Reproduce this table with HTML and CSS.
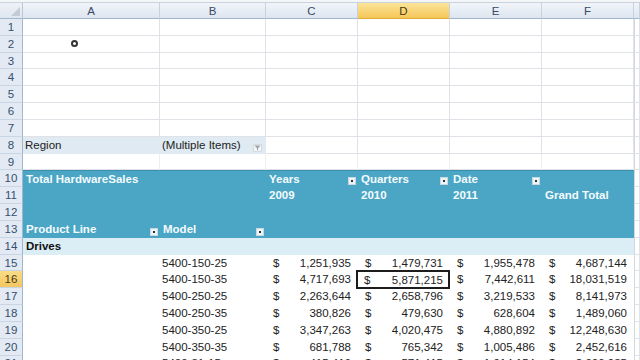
FILE: index.html
```html
<!DOCTYPE html>
<html>
<head>
<meta charset="utf-8">
<link rel="stylesheet" href="styles.css">
</head>
<body>
<div class="topstrip"></div>
<div class="sheet">
  <div class="row hdr">
    <div class="corner"><span class="tri"></span></div>
    <div class="ch">A</div><div class="ch">B</div><div class="ch">C</div>
    <div class="ch active">D</div><div class="ch">E</div><div class="ch">F</div><div class="ch"></div>
  </div>

  <div class="row"><div class="rh">1</div><div class="c"></div><div class="c"></div><div class="c"></div><div class="c"></div><div class="c"></div><div class="c"></div><div class="c g"></div></div>
  <div class="row"><div class="rh">2</div><div class="c"><span class="cursor"></span></div><div class="c"></div><div class="c"></div><div class="c"></div><div class="c"></div><div class="c"></div><div class="c g"></div></div>
  <div class="row"><div class="rh">3</div><div class="c"></div><div class="c"></div><div class="c"></div><div class="c"></div><div class="c"></div><div class="c"></div><div class="c g"></div></div>
  <div class="row"><div class="rh">4</div><div class="c"></div><div class="c"></div><div class="c"></div><div class="c"></div><div class="c"></div><div class="c"></div><div class="c g"></div></div>
  <div class="row"><div class="rh">5</div><div class="c"></div><div class="c"></div><div class="c"></div><div class="c"></div><div class="c"></div><div class="c"></div><div class="c g"></div></div>
  <div class="row"><div class="rh">6</div><div class="c"></div><div class="c"></div><div class="c"></div><div class="c"></div><div class="c"></div><div class="c"></div><div class="c g"></div></div>
  <div class="row"><div class="rh">7</div><div class="c"></div><div class="c"></div><div class="c"></div><div class="c"></div><div class="c"></div><div class="c"></div><div class="c g"></div></div>
  <div class="row"><div class="rh">8</div><div class="c filt">Region</div><div class="c filt">(Multiple Items)<span class="fbtn"><svg width="7" height="6" viewBox="0 0 7 6"><path d="M0.5 0.5h6L4 3.2V5.5L3 5V3.2z" fill="#9aa3ad"/></svg></span></div><div class="c"></div><div class="c"></div><div class="c"></div><div class="c"></div><div class="c g"></div></div>
  <div class="row"><div class="rh">9</div><div class="c nb"></div><div class="c nb"></div><div class="c nb"></div><div class="c nb"></div><div class="c nb"></div><div class="c nb"></div><div class="c g"></div></div>

  <div class="row band first"><div class="rh">10</div><div class="c">Total HardwareSales</div><div class="c"></div><div class="c">Years<span class="dd"></span></div><div class="c">Quarters<span class="dd"></span></div><div class="c">Date<span class="dd"></span></div><div class="c"></div><div class="c g"></div></div>
  <div class="row band"><div class="rh">11</div><div class="c"></div><div class="c"></div><div class="c">2009</div><div class="c">2010</div><div class="c">2011</div><div class="c">Grand Total</div><div class="c g"></div></div>
  <div class="row band"><div class="rh">12</div><div class="c"></div><div class="c"></div><div class="c"></div><div class="c"></div><div class="c"></div><div class="c"></div><div class="c g"></div></div>
  <div class="row band"><div class="rh">13</div><div class="c">Product Line<span class="dd"></span></div><div class="c">Model<span class="dd"></span></div><div class="c"></div><div class="c"></div><div class="c"></div><div class="c"></div><div class="c g"></div></div>

  <div class="row sub"><div class="rh">14</div><div class="c">Drives</div><div class="c"></div><div class="c"></div><div class="c"></div><div class="c"></div><div class="c"></div><div class="c g"></div></div>

  <div class="row data"><div class="rh">15</div><div class="c"></div><div class="c">5400-150-25</div><div class="c m"><span>$</span><span>1,251,935</span></div><div class="c m"><span>$</span><span>1,479,731</span></div><div class="c m"><span>$</span><span>1,955,478</span></div><div class="c m"><span>$</span><span>4,687,144</span></div><div class="c g"></div></div>
  <div class="row data"><div class="rh sel">16</div><div class="c"></div><div class="c">5400-150-35</div><div class="c m"><span>$</span><span>4,717,693</span></div><div class="c m activecell"><span>$</span><span>5,871,215</span></div><div class="c m"><span>$</span><span>7,442,611</span></div><div class="c m"><span>$</span><span>18,031,519</span></div><div class="c g"></div></div>
  <div class="row data"><div class="rh">17</div><div class="c"></div><div class="c">5400-250-25</div><div class="c m"><span>$</span><span>2,263,644</span></div><div class="c m"><span>$</span><span>2,658,796</span></div><div class="c m"><span>$</span><span>3,219,533</span></div><div class="c m"><span>$</span><span>8,141,973</span></div><div class="c g"></div></div>
  <div class="row data"><div class="rh">18</div><div class="c"></div><div class="c">5400-250-35</div><div class="c m"><span>$</span><span>380,826</span></div><div class="c m"><span>$</span><span>479,630</span></div><div class="c m"><span>$</span><span>628,604</span></div><div class="c m"><span>$</span><span>1,489,060</span></div><div class="c g"></div></div>
  <div class="row data"><div class="rh">19</div><div class="c"></div><div class="c">5400-350-25</div><div class="c m"><span>$</span><span>3,347,263</span></div><div class="c m"><span>$</span><span>4,020,475</span></div><div class="c m"><span>$</span><span>4,880,892</span></div><div class="c m"><span>$</span><span>12,248,630</span></div><div class="c g"></div></div>
  <div class="row data"><div class="rh">20</div><div class="c"></div><div class="c">5400-350-35</div><div class="c m"><span>$</span><span>681,788</span></div><div class="c m"><span>$</span><span>765,342</span></div><div class="c m"><span>$</span><span>1,005,486</span></div><div class="c m"><span>$</span><span>2,452,616</span></div><div class="c g"></div></div>
  <div class="row data"><div class="rh">21</div><div class="c"></div><div class="c">5400-31-15</div><div class="c m"><span>$</span><span>415,416</span></div><div class="c m"><span>$</span><span>571,415</span></div><div class="c m"><span>$</span><span>1,014,154</span></div><div class="c m"><span>$</span><span>2,000,985</span></div><div class="c g"></div></div>
</div>
</body>
</html>
```

FILE: styles.css
```css
html, body {
  margin: 0;
  padding: 0;
  background: #ffffff;
  overflow: hidden;
}
body {
  width: 640px;
  height: 360px;
  font-family: "Liberation Sans", Arial, sans-serif;
  font-size: 11.5px;
  color: #222222;
}
.topstrip {
  height: 3px;
  background: #f3f5f7;
  border-bottom: 1px solid #c9d3de;
  box-sizing: border-box;
}
.sheet {
  display: flex;
  flex-direction: column;
}
.row {
  display: grid;
  grid-template-columns: 23px 137px 106px 92px 92px 92px 92px 1fr;
  height: 16.83px;
}
.row.hdr {
  height: 16px;
}
.corner {
  background: linear-gradient(#eef2f7, #dfe6ef);
  border-right: 1px solid #b9c7d7;
  border-bottom: 1px solid #9eb6ce;
  box-sizing: border-box;
  position: relative;
}
.tri {
  position: absolute;
  right: 2px;
  bottom: 2px;
  width: 0;
  height: 0;
  border-left: 9px solid transparent;
  border-bottom: 9px solid #c3ccd6;
}
.ch {
  background: linear-gradient(#f1f5fa, #dde5ef);
  border-right: 1px solid #c6d2df;
  border-bottom: 1px solid #9eb6ce;
  box-sizing: border-box;
  display: flex;
  align-items: center;
  justify-content: center;
  color: #3a4a63;
  font-size: 11.5px;
}
.ch.active {
  background: linear-gradient(#fbe49a, #f5c758);
  border-bottom-color: #e2a93d;
  color: #4a3a10;
}
.rh {
  background: #e3eaf3;
  border-right: 1px solid #9eb6ce;
  border-bottom: 1px solid #c9d5e3;
  box-sizing: border-box;
  display: flex;
  align-items: center;
  justify-content: center;
  color: #34506f;
  font-size: 11.5px;
}
.rh.sel {
  background: linear-gradient(#f9dc86, #f3c661);
  color: #4a3a10;
}
.c {
  border-right: 1px solid #dfe2e6;
  border-bottom: 1px solid #dfe2e6;
  box-sizing: border-box;
  display: flex;
  align-items: center;
  padding: 0 2px;
  white-space: nowrap;
  overflow: hidden;
}
.c.nb {
  border-right-color: #eceef0;
}
.c.filt {
  background: #dfeaf2;
  border-right-color: #dfeaf2;
  border-bottom-color: #dfeaf2;
}
.fbtn {
  margin-left: auto;
  align-self: flex-end;
  margin-bottom: 1px;
  margin-right: 1px;
  width: 9px;
  height: 8px;
  box-sizing: border-box;
  border: 1px solid #d6dbe0;
  background: #f2f4f6;
  display: flex;
  align-items: center;
  justify-content: center;
}
.cursor {
  display: block;
  width: 7px;
  height: 7px;
  box-sizing: border-box;
  border: 2px solid #333;
  border-radius: 50%;
  margin-left: 46px;
}
.band .c:not(.g) {
  background: #4aa6c4;
  border-color: #4aa6c4;
  color: #f4fbfe;
  font-weight: bold;
  padding: 0 3px;
}
.band.first .c:not(.g) {
  border-top: 1px solid #3a8fae;
}
.dd {
  margin-left: auto;
  align-self: flex-end;
  margin-bottom: 1px;
  margin-right: -2px;
  width: 8px;
  height: 8px;
  box-sizing: border-box;
  background: #eef3f6;
  border: 1px solid #c8d8e0;
  position: relative;
}
.dd::after {
  content: "";
  position: absolute;
  left: 2px;
  top: 2px;
  width: 2px;
  height: 2px;
  background: #2a3440;
}
.sub .c:not(.g) {
  background: #dbeef6;
  border-color: #dbeef6;
  font-weight: bold;
  color: #111;
  padding: 0 3px;
}
.data .c:not(.g) {
  border-color: transparent;
}
.c.m {
  justify-content: space-between;
  padding: 0 6px 0 7px;
}
.data .c.activecell {
  border: 2px solid #1c1c1c;
  margin: -1px 0 0 -2px;
  height: calc(100% + 2px);
  padding: 0 5px 0 6px;
}
.c.g {
  border-left: 1px solid #d4d8dc;
}
```
